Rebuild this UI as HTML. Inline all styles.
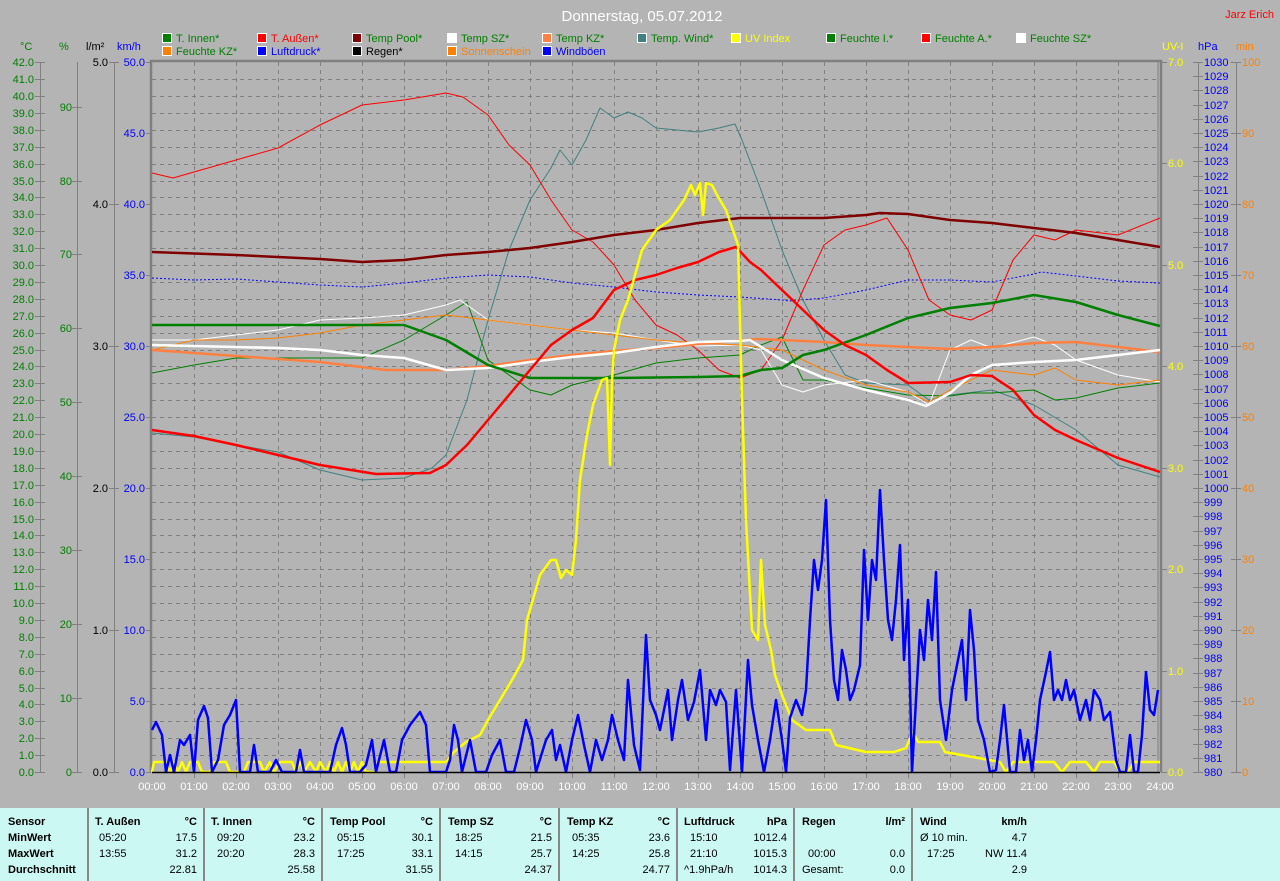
<!DOCTYPE html>
<html><head><meta charset="utf-8"><style>
body{margin:0;width:1280px;height:881px;overflow:hidden;background:#b4b4b4;font-family:"Liberation Sans",sans-serif}
svg{position:absolute;left:0;top:0}
#tb{position:absolute;left:0;top:808px;width:1280px;height:73px;background:#ccf8f4;font-size:11px;color:#000}
.c{position:absolute;top:0;height:73px;border-right:2px solid #888}
.r{position:absolute;white-space:nowrap}
b{font-weight:bold}
</style></head><body>
<svg width="1280" height="808" viewBox="0 0 1280 808" font-family="Liberation Sans, sans-serif" font-size="11">
<text x="642" y="21" fill="#fff" font-size="15" text-anchor="middle">Donnerstag, 05.07.2012</text>
<text x="1274" y="18" fill="#f00" font-size="11" text-anchor="end">Jarz Erich</text>
<g stroke="#fff" stroke-width="1">
<rect x="162.5" y="33.5" width="9" height="9" fill="#008000"/>
<rect x="257.5" y="33.5" width="9" height="9" fill="#f00"/>
<rect x="352.5" y="33.5" width="9" height="9" fill="#800000"/>
<rect x="447.5" y="33.5" width="9" height="9" fill="#fff"/>
<rect x="542.5" y="33.5" width="9" height="9" fill="#ff8040"/>
<rect x="637.5" y="33.5" width="9" height="9" fill="#408080"/>
<rect x="731.5" y="33.5" width="9" height="9" fill="#ff0"/>
<rect x="826.5" y="33.5" width="9" height="9" fill="#008000"/>
<rect x="921.5" y="33.5" width="9" height="9" fill="#f00"/>
<rect x="1016.5" y="33.5" width="9" height="9" fill="#fff"/>
<rect x="162.5" y="46.5" width="9" height="9" fill="#ff8000"/>
<rect x="257.5" y="46.5" width="9" height="9" fill="#00f"/>
<rect x="352.5" y="46.5" width="9" height="9" fill="#000"/>
<rect x="447.5" y="46.5" width="9" height="9" fill="#ff8000"/>
<rect x="542.5" y="46.5" width="9" height="9" fill="#00f"/>
</g>
<g fill="#008000">
<text x="176" y="42">T. Innen*</text><text x="271" y="42" fill="#f00">T. Außen*</text><text x="366" y="42">Temp Pool*</text><text x="461" y="42">Temp SZ*</text><text x="556" y="42">Temp KZ*</text><text x="651" y="42">Temp. Wind*</text><text x="745" y="42" fill="#ff0">UV Index</text><text x="840" y="42">Feuchte I.*</text><text x="935" y="42">Feuchte A.*</text><text x="1030" y="42">Feuchte SZ*</text>
<text x="176" y="55">Feuchte KZ*</text><text x="271" y="55" fill="#00f">Luftdruck*</text><text x="366" y="55" fill="#000">Regen*</text><text x="461" y="55" fill="#ff8000">Sonnenschein</text><text x="556" y="55" fill="#00f">Windböen</text>
</g>
<!-- grid -->
<g stroke="#808080" stroke-dasharray="4,4" stroke-width="1">
<path d="M194.5 62V772M236.5 62V772M278.5 62V772M320.5 62V772M362.5 62V772M404.5 62V772M446.5 62V772M488.5 62V772M530.5 62V772M572.5 62V772M614.5 62V772M656.5 62V772M698.5 62V772M740.5 62V772M782.5 62V772M824.5 62V772M866.5 62V772M908.5 62V772M950.5 62V772M992.5 62V772M1034.5 62V772M1076.5 62V772M1118.5 62V772"/>
<path d="M152 79.5H1158M152 96.5H1158M152 113.5H1158M152 130.5H1158M152 147.5H1158M152 164.5H1158M152 181.5H1158M152 197.5H1158M152 214.5H1158M152 231.5H1158M152 248.5H1158M152 265.5H1158M152 282.5H1158M152 299.5H1158M152 316.5H1158M152 333.5H1158M152 350.5H1158M152 366.5H1158M152 383.5H1158M152 400.5H1158M152 417.5H1158M152 434.5H1158M152 451.5H1158M152 468.5H1158M152 485.5H1158M152 502.5H1158M152 519.5H1158M152 535.5H1158M152 552.5H1158M152 569.5H1158M152 586.5H1158M152 603.5H1158M152 620.5H1158M152 637.5H1158M152 654.5H1158M152 671.5H1158M152 688.5H1158M152 704.5H1158M152 721.5H1158M152 738.5H1158M152 755.5H1158"/>
</g>
<path d="M151 772V61H1161V772" fill="none" stroke="#808080" stroke-width="2.5"/>
<path d="M1158 62V772" stroke="#808080" stroke-width="1"/>
<!-- axes lines -->
<g stroke="#808080" stroke-width="1" fill="none">
<path d="M40.5 62V772M77.5 62V772M114.5 62V772M1198.5 62V772M1236.5 62V772"/>
<path d="M35 62.5H45M35 79.5H45M35 96.5H45M35 113.5H45M35 130.5H45M35 147.5H45M35 164.5H45M35 181.5H45M35 197.5H45M35 214.5H45M35 231.5H45M35 248.5H45M35 265.5H45M35 282.5H45M35 299.5H45M35 316.5H45M35 333.5H45M35 350.5H45M35 366.5H45M35 383.5H45M35 400.5H45M35 417.5H45M35 434.5H45M35 451.5H45M35 468.5H45M35 485.5H45M35 502.5H45M35 519.5H45M35 535.5H45M35 552.5H45M35 569.5H45M35 586.5H45M35 603.5H45M35 620.5H45M35 637.5H45M35 654.5H45M35 671.5H45M35 688.5H45M35 704.5H45M35 721.5H45M35 738.5H45M35 755.5H45M35 772.5H45"/>
<path d="M72 107.5H82M72 181.5H82M72 254.5H82M72 328.5H82M72 402.5H82M72 476.5H82M72 550.5H82M72 624.5H82M72 698.5H82M72 772.5H82"/>
<path d="M109 62.5H119M109 204.5H119M109 346.5H119M109 488.5H119M109 630.5H119M109 772.5H119"/>
<path d="M146 62.5H151M146 133.5H151M146 204.5H151M146 275.5H151M146 346.5H151M146 417.5H151M146 488.5H151M146 559.5H151M146 630.5H151M146 701.5H151M146 772.5H151"/>
<path d="M1161 62.5H1167M1161 163.5H1167M1161 265.5H1167M1161 366.5H1167M1161 468.5H1167M1161 569.5H1167M1161 671.5H1167M1161 772.5H1167"/>
<path d="M1193 62.5H1203M1193 76.5H1203M1193 90.5H1203M1193 105.5H1203M1193 119.5H1203M1193 133.5H1203M1193 147.5H1203M1193 161.5H1203M1193 176.5H1203M1193 190.5H1203M1193 204.5H1203M1193 218.5H1203M1193 232.5H1203M1193 247.5H1203M1193 261.5H1203M1193 275.5H1203M1193 289.5H1203M1193 303.5H1203M1193 318.5H1203M1193 332.5H1203M1193 346.5H1203M1193 360.5H1203M1193 374.5H1203M1193 389.5H1203M1193 403.5H1203M1193 417.5H1203M1193 431.5H1203M1193 445.5H1203M1193 460.5H1203M1193 474.5H1203M1193 488.5H1203M1193 502.5H1203M1193 516.5H1203M1193 531.5H1203M1193 545.5H1203M1193 559.5H1203M1193 573.5H1203M1193 587.5H1203M1193 602.5H1203M1193 616.5H1203M1193 630.5H1203M1193 644.5H1203M1193 658.5H1203M1193 673.5H1203M1193 687.5H1203M1193 701.5H1203M1193 715.5H1203M1193 729.5H1203M1193 744.5H1203M1193 758.5H1203M1193 772.5H1203"/>
<path d="M1231 62.5H1241M1231 133.5H1241M1231 204.5H1241M1231 275.5H1241M1231 346.5H1241M1231 417.5H1241M1231 488.5H1241M1231 559.5H1241M1231 630.5H1241M1231 701.5H1241M1231 772.5H1241"/>
<path d="M194.5 772V778M236.5 772V778M278.5 772V778M320.5 772V778M362.5 772V778M404.5 772V778M446.5 772V778M488.5 772V778M530.5 772V778M572.5 772V778M614.5 772V778M656.5 772V778M698.5 772V778M740.5 772V778M782.5 772V778M824.5 772V778M866.5 772V778M908.5 772V778M950.5 772V778M992.5 772V778M1034.5 772V778M1076.5 772V778M1118.5 772V778"/>
</g>
<g font-size="11">
<text x="20" y="50" fill="#008000">°C</text><text x="59" y="50" fill="#008000">%</text><text x="86" y="50">l/m²</text><text x="117" y="50" fill="#00f">km/h</text>
<text x="1162" y="50" fill="#ff0">UV-I</text><text x="1198" y="50" fill="#00f">hPa</text><text x="1236" y="50" fill="#ff8000">min</text>
<g fill="#008000" text-anchor="end">
<text x="34" y="66">42.0</text><text x="34" y="83">41.0</text><text x="34" y="100">40.0</text><text x="34" y="117">39.0</text><text x="34" y="134">38.0</text><text x="34" y="151">37.0</text><text x="34" y="168">36.0</text><text x="34" y="185">35.0</text><text x="34" y="201">34.0</text><text x="34" y="218">33.0</text><text x="34" y="235">32.0</text><text x="34" y="252">31.0</text><text x="34" y="269">30.0</text><text x="34" y="286">29.0</text><text x="34" y="303">28.0</text><text x="34" y="320">27.0</text><text x="34" y="337">26.0</text><text x="34" y="354">25.0</text><text x="34" y="370">24.0</text><text x="34" y="387">23.0</text><text x="34" y="404">22.0</text><text x="34" y="421">21.0</text><text x="34" y="438">20.0</text><text x="34" y="455">19.0</text><text x="34" y="472">18.0</text><text x="34" y="489">17.0</text><text x="34" y="506">16.0</text><text x="34" y="523">15.0</text><text x="34" y="539">14.0</text><text x="34" y="556">13.0</text><text x="34" y="573">12.0</text><text x="34" y="590">11.0</text><text x="34" y="607">10.0</text><text x="34" y="624">9.0</text><text x="34" y="641">8.0</text><text x="34" y="658">7.0</text><text x="34" y="675">6.0</text><text x="34" y="692">5.0</text><text x="34" y="708">4.0</text><text x="34" y="725">3.0</text><text x="34" y="742">2.0</text><text x="34" y="759">1.0</text><text x="34" y="776">0.0</text>
<text x="72" y="111">90</text><text x="72" y="185">80</text><text x="72" y="258">70</text><text x="72" y="332">60</text><text x="72" y="406">50</text><text x="72" y="480">40</text><text x="72" y="554">30</text><text x="72" y="628">20</text><text x="72" y="702">10</text><text x="72" y="776">0</text>
</g>
<g text-anchor="end"><text x="108" y="66">5.0</text><text x="108" y="208">4.0</text><text x="108" y="350">3.0</text><text x="108" y="492">2.0</text><text x="108" y="634">1.0</text><text x="108" y="776">0.0</text></g>
<g text-anchor="end" fill="#00f"><text x="145" y="66">50.0</text><text x="145" y="137">45.0</text><text x="145" y="208">40.0</text><text x="145" y="279">35.0</text><text x="145" y="350">30.0</text><text x="145" y="421">25.0</text><text x="145" y="492">20.0</text><text x="145" y="563">15.0</text><text x="145" y="634">10.0</text><text x="145" y="705">5.0</text><text x="145" y="776">0.0</text></g>
<g fill="#ff0"><text x="1168" y="66">7.0</text><text x="1168" y="167">6.0</text><text x="1168" y="269">5.0</text><text x="1168" y="370">4.0</text><text x="1168" y="472">3.0</text><text x="1168" y="573">2.0</text><text x="1168" y="675">1.0</text><text x="1168" y="776">0.0</text></g>
<g fill="#00f"><text x="1204" y="66">1030</text><text x="1204" y="80">1029</text><text x="1204" y="94">1028</text><text x="1204" y="109">1027</text><text x="1204" y="123">1026</text><text x="1204" y="137">1025</text><text x="1204" y="151">1024</text><text x="1204" y="165">1023</text><text x="1204" y="180">1022</text><text x="1204" y="194">1021</text><text x="1204" y="208">1020</text><text x="1204" y="222">1019</text><text x="1204" y="236">1018</text><text x="1204" y="251">1017</text><text x="1204" y="265">1016</text><text x="1204" y="279">1015</text><text x="1204" y="293">1014</text><text x="1204" y="307">1013</text><text x="1204" y="322">1012</text><text x="1204" y="336">1011</text><text x="1204" y="350">1010</text><text x="1204" y="364">1009</text><text x="1204" y="378">1008</text><text x="1204" y="393">1007</text><text x="1204" y="407">1006</text><text x="1204" y="421">1005</text><text x="1204" y="435">1004</text><text x="1204" y="449">1003</text><text x="1204" y="464">1002</text><text x="1204" y="478">1001</text><text x="1204" y="492">1000</text><text x="1204" y="506">999</text><text x="1204" y="520">998</text><text x="1204" y="535">997</text><text x="1204" y="549">996</text><text x="1204" y="563">995</text><text x="1204" y="577">994</text><text x="1204" y="591">993</text><text x="1204" y="606">992</text><text x="1204" y="620">991</text><text x="1204" y="634">990</text><text x="1204" y="648">989</text><text x="1204" y="662">988</text><text x="1204" y="677">987</text><text x="1204" y="691">986</text><text x="1204" y="705">985</text><text x="1204" y="719">984</text><text x="1204" y="733">983</text><text x="1204" y="748">982</text><text x="1204" y="762">981</text><text x="1204" y="776">980</text></g>
<g fill="#ff8000"><text x="1242" y="66">100</text><text x="1242" y="137">90</text><text x="1242" y="208">80</text><text x="1242" y="279">70</text><text x="1242" y="350">60</text><text x="1242" y="421">50</text><text x="1242" y="492">40</text><text x="1242" y="563">30</text><text x="1242" y="634">20</text><text x="1242" y="705">10</text><text x="1242" y="776">0</text></g>
<g fill="#fff" text-anchor="middle"><text x="152" y="790">00:00</text><text x="194" y="790">01:00</text><text x="236" y="790">02:00</text><text x="278" y="790">03:00</text><text x="320" y="790">04:00</text><text x="362" y="790">05:00</text><text x="404" y="790">06:00</text><text x="446" y="790">07:00</text><text x="488" y="790">08:00</text><text x="530" y="790">09:00</text><text x="572" y="790">10:00</text><text x="614" y="790">11:00</text><text x="656" y="790">12:00</text><text x="698" y="790">13:00</text><text x="740" y="790">14:00</text><text x="782" y="790">15:00</text><text x="824" y="790">16:00</text><text x="866" y="790">17:00</text><text x="908" y="790">18:00</text><text x="950" y="790">19:00</text><text x="992" y="790">20:00</text><text x="1034" y="790">21:00</text><text x="1076" y="790">22:00</text><text x="1118" y="790">23:00</text><text x="1160" y="790">24:00</text></g>
</g>
<g fill="none" stroke-linejoin="round">
<!-- Luftdruck dotted -->
<polyline stroke="#00f" stroke-dasharray="2,2" points="152,278 194,280 236,279 278,282 320,285 362,287 404,283 446,278 488,275 530,277 572,283 614,287 656,292 698,295 740,297 782,300 789,301 824,298 866,290 908,280 950,280 992,282 1034,274 1041,272 1076,276 1118,281 1160,283"/>
<!-- Temp Wind -->
<polyline stroke="#408080" points="152,433 194,437 236,445 278,452 320,470 362,480 404,478 432,468 446,455 467,400 488,320 509,250 530,200 551,168 560,150 572,165 586,140 600,108 614,118 628,112 642,118 656,128 677,130 698,132 719,128 735,124 742,140 761,190 782,250 803,300 824,340 845,375 866,383 908,385 929,400 950,395 992,390 1034,405 1076,430 1118,465 1160,477"/>
<!-- Feuchte A -->
<polyline stroke="#f00" points="152,173 173,178 194,172 236,160 278,148 320,125 362,105 404,100 446,93 463,97 488,115 509,145 530,165 551,200 572,230 593,242 614,265 635,300 656,325 677,335 698,350 719,370 740,378 761,370 782,340 803,290 824,245 845,230 866,225 887,218 908,250 929,300 950,315 971,320 992,310 1013,260 1034,235 1055,240 1076,230 1118,235 1160,218"/>
<!-- Feuchte I -->
<polyline stroke="#008000" points="152,373 194,365 236,358 362,358 404,340 446,315 467,302 488,360 509,375 530,390 551,395 572,385 614,375 656,363 698,358 740,355 761,345 782,337 803,380 824,380 866,388 908,395 950,396 971,393 992,393 1034,390 1055,400 1076,398 1118,388 1160,383"/>
<!-- Feuchte SZ -->
<polyline stroke="#fff" points="152,340 194,340 236,335 278,330 320,320 362,318 404,315 446,305 460,300 488,320 530,325 572,330 614,333 656,340 698,346 740,345 761,350 782,385 803,392 824,385 866,380 908,392 929,405 950,350 971,340 992,348 1034,337 1055,345 1076,360 1118,375 1160,382"/>
<!-- Feuchte KZ -->
<polyline stroke="#ff8000" points="152,350 194,340 236,340 278,338 320,333 362,325 404,320 446,315 488,320 530,325 572,330 614,335 656,340 698,343 740,345 782,350 824,370 866,385 908,392 929,402 950,390 992,370 1034,375 1055,368 1076,380 1118,385 1160,380"/>
</g>
<g fill="none" stroke-width="2.5" stroke-linejoin="round">
<polyline stroke="#800000" points="152,252 236,255 320,259 362,262 404,260 446,255 488,252 530,248 572,242 614,235 656,230 698,223 740,218 824,218 866,215 880,213 908,214 950,220 992,223 1034,228 1076,233 1118,240 1160,247"/>
<polyline stroke="#ff8040" points="152,350 236,356 320,362 386,370 446,370 488,366 530,360 572,355 614,351 656,348 698,344 758,339 782,340 824,342 866,345 908,347 950,349 992,347 1034,343 1076,342 1118,347 1160,352"/>
<polyline stroke="#fff" points="152,345 278,348 320,350 362,355 404,358 446,370 488,368 530,362 572,357 614,353 656,347 698,342 740,341 750,340 782,360 824,378 866,390 908,400 926,406 950,393 971,375 992,365 1034,362 1076,360 1118,355 1160,350"/>
<polyline stroke="#008000" points="152,325 404,325 446,340 488,365 530,378 614,378 698,377 740,376 761,370 782,368 803,355 824,350 866,335 908,318 950,308 992,303 1034,295 1076,302 1118,315 1160,326"/>
<polyline stroke="#f00" points="152,430 194,436 236,445 278,455 320,465 376,474 430,473 446,465 467,445 488,420 509,395 530,370 551,345 572,330 593,318 614,290 635,280 656,275 677,268 698,262 719,252 736,247 750,262 761,270 782,290 803,310 824,330 845,345 866,355 887,370 908,383 950,382 971,375 992,376 1013,390 1034,415 1055,430 1076,440 1118,458 1160,472"/>
<!-- UV -->
<polyline stroke="#ff0" points="152,772 154,762 166,762 170,772 174,762 178,772 182,762 186,772 190,762 198,762 202,772 210,772 214,762 226,762 230,772 244,772 248,762 260,762 264,772 270,762 274,772 280,762 292,762 296,772 300,762 304,772 310,762 316,772 320,762 326,772 330,762 334,772 338,762 342,772 346,762 350,772 354,762 358,772 362,762 366,772 376,772 378,762 446,762 454,752 466,742 480,735 488,720 500,700 512,680 523,660 527,620 540,575 551,560 556,560 561,578 566,570 572,575 576,540 580,480 587,435 593,405 602,380 607,378 610,465 612,380 614,350 620,320 628,300 642,250 656,230 670,220 684,200 691,185 695,195 700,183 703,215 706,183 712,185 717,195 726,210 738,245 742,400 746,520 752,630 758,640 761,560 765,625 771,650 775,675 782,695 792,720 806,730 830,730 836,745 866,752 894,752 906,748 913,732 918,742 940,742 945,752 1000,762 1006,772 1013,762 1054,762 1062,772 1070,762 1086,762 1094,772 1100,762 1114,762 1120,772 1128,772 1134,762 1160,762"/>
<!-- Windboen -->
<polyline stroke="#00f" points="152,730 156,722 162,735 166,772 170,755 174,772 180,740 184,745 190,735 194,772 198,720 204,706 208,718 212,772 218,760 224,725 230,715 236,700 240,772 250,772 254,745 258,772 270,772 276,760 282,772 296,772 300,750 304,772 330,772 336,745 342,728 346,745 350,772 360,772 366,765 372,740 376,772 384,740 390,772 396,772 402,740 410,725 420,712 426,725 430,772 446,772 450,760 454,725 458,740 462,772 470,740 476,772 486,772 492,755 500,740 506,772 514,772 520,748 526,720 532,740 536,772 546,740 552,730 556,760 560,745 566,772 572,740 578,715 584,745 590,772 596,740 602,760 608,740 612,715 618,740 624,760 628,680 634,745 640,770 646,635 650,700 656,715 660,730 668,690 672,740 678,700 682,680 688,720 694,702 700,670 706,740 710,690 716,705 720,690 726,702 730,770 736,690 742,772 748,660 752,705 758,740 764,772 770,740 776,700 782,740 786,772 790,718 796,700 802,715 806,690 810,620 814,560 818,590 822,560 826,500 830,620 834,680 838,700 842,650 846,670 850,700 854,690 860,665 864,550 868,620 872,560 876,580 880,490 884,560 888,620 892,640 896,600 900,545 904,660 908,600 912,772 916,700 920,630 924,660 928,600 932,640 936,572 940,700 946,740 952,690 958,660 962,640 966,700 970,610 974,650 978,720 984,740 990,772 996,770 1000,740 1004,705 1010,772 1016,772 1020,730 1024,760 1028,740 1032,772 1036,740 1040,700 1046,672 1050,652 1054,700 1058,690 1062,700 1066,680 1070,700 1074,690 1080,720 1086,700 1090,720 1094,690 1100,700 1104,720 1110,712 1116,760 1120,772 1126,772 1130,735 1134,772 1138,772 1142,735 1146,672 1150,710 1154,715 1158,690"/>
</g>
<path d="M152 772.5H1160" stroke="#000" stroke-width="1.5"/>
</svg>
<div id="tb">
<div class="c" style="left:0;width:87px"><div class="r" style="left:8px;top:8px"><b>Sensor</b></div><div class="r" style="left:8px;top:24px"><b>MinWert</b></div><div class="r" style="left:8px;top:40px"><b>MaxWert</b></div><div class="r" style="left:8px;top:56px"><b>Durchschnitt</b></div></div>
<div class="c" style="left:89px;width:114px"><div class="r" style="left:6px;top:8px"><b>T. Außen</b></div><div class="r" style="right:6px;top:8px"><b>°C</b></div><div class="r" style="left:10px;top:24px">05:20</div><div class="r" style="right:6px;top:24px">17.5</div><div class="r" style="left:10px;top:40px">13:55</div><div class="r" style="right:6px;top:40px">31.2</div><div class="r" style="right:6px;top:56px">22.81</div></div>
<div class="c" style="left:205px;width:116px"><div class="r" style="left:6px;top:8px"><b>T. Innen</b></div><div class="r" style="right:6px;top:8px"><b>°C</b></div><div class="r" style="left:12px;top:24px">09:20</div><div class="r" style="right:6px;top:24px">23.2</div><div class="r" style="left:12px;top:40px">20:20</div><div class="r" style="right:6px;top:40px">28.3</div><div class="r" style="right:6px;top:56px">25.58</div></div>
<div class="c" style="left:323px;width:116px"><div class="r" style="left:7px;top:8px"><b>Temp Pool</b></div><div class="r" style="right:6px;top:8px"><b>°C</b></div><div class="r" style="left:14px;top:24px">05:15</div><div class="r" style="right:6px;top:24px">30.1</div><div class="r" style="left:14px;top:40px">17:25</div><div class="r" style="right:6px;top:40px">33.1</div><div class="r" style="right:6px;top:56px">31.55</div></div>
<div class="c" style="left:441px;width:117px"><div class="r" style="left:7px;top:8px"><b>Temp SZ</b></div><div class="r" style="right:6px;top:8px"><b>°C</b></div><div class="r" style="left:14px;top:24px">18:25</div><div class="r" style="right:6px;top:24px">21.5</div><div class="r" style="left:14px;top:40px">14:15</div><div class="r" style="right:6px;top:40px">25.7</div><div class="r" style="right:6px;top:56px">24.37</div></div>
<div class="c" style="left:560px;width:116px"><div class="r" style="left:7px;top:8px"><b>Temp KZ</b></div><div class="r" style="right:6px;top:8px"><b>°C</b></div><div class="r" style="left:12px;top:24px">05:35</div><div class="r" style="right:6px;top:24px">23.6</div><div class="r" style="left:12px;top:40px">14:25</div><div class="r" style="right:6px;top:40px">25.8</div><div class="r" style="right:6px;top:56px">24.77</div></div>
<div class="c" style="left:678px;width:115px"><div class="r" style="left:6px;top:8px"><b>Luftdruck</b></div><div class="r" style="right:6px;top:8px"><b>hPa</b></div><div class="r" style="left:12px;top:24px">15:10</div><div class="r" style="right:6px;top:24px">1012.4</div><div class="r" style="left:12px;top:40px">21:10</div><div class="r" style="right:6px;top:40px">1015.3</div><div class="r" style="left:6px;top:56px">^1.9hPa/h</div><div class="r" style="right:6px;top:56px">1014.3</div></div>
<div class="c" style="left:795px;width:116px"><div class="r" style="left:7px;top:8px"><b>Regen</b></div><div class="r" style="right:6px;top:8px"><b>l/m²</b></div><div class="r" style="left:13px;top:40px">00:00</div><div class="r" style="right:6px;top:40px">0.0</div><div class="r" style="left:7px;top:56px">Gesamt:</div><div class="r" style="right:6px;top:56px">0.0</div></div>
<div style="position:absolute;left:913px;top:0;width:120px;height:73px"><div class="r" style="left:7px;top:8px"><b>Wind</b></div><div class="r" style="right:6px;top:8px"><b>km/h</b></div><div class="r" style="left:7px;top:24px">Ø 10 min.</div><div class="r" style="right:6px;top:24px">4.7</div><div class="r" style="left:14px;top:40px">17:25</div><div class="r" style="right:6px;top:40px">NW 11.4</div><div class="r" style="right:6px;top:56px">2.9</div></div>
</div>
</body></html>
